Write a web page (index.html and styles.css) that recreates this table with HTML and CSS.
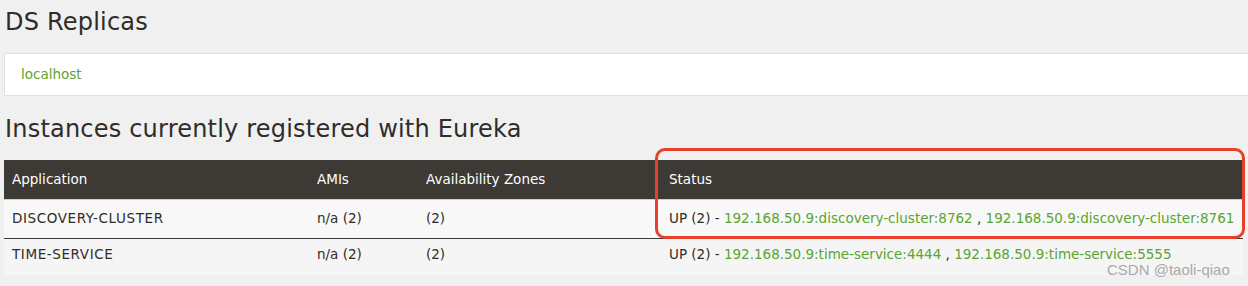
FILE: index.html
```html
<!DOCTYPE html>
<html>
<head>
<meta charset="utf-8">
<link rel="stylesheet" href="styles.css">
</head>
<body>
<div class="page">
  <h1 class="title">DS Replicas</h1>
  <ul class="replicas">
    <li><a class="link" href="#">localhost</a></li>
  </ul>
  <h1 class="title title-instances">Instances currently registered with Eureka</h1>
  <table class="instances">
    <thead>
      <tr>
        <th class="col-app">Application</th>
        <th class="col-ami">AMIs</th>
        <th class="col-az">Availability Zones</th>
        <th class="col-status">Status</th>
      </tr>
    </thead>
    <tbody>
      <tr class="row-first">
        <td class="app">DISCOVERY-CLUSTER</td>
        <td>n/a (2)</td>
        <td>(2)</td>
        <td>UP (2) - <a class="link" href="#">192.168.50.9:discovery-cluster:8762</a> , <a class="link" href="#">192.168.50.9:discovery-cluster:8761</a></td>
      </tr>
      <tr class="row-second">
        <td class="app">TIME-SERVICE</td>
        <td>n/a (2)</td>
        <td>(2)</td>
        <td>UP (2) - <a class="link" href="#">192.168.50.9:time-service:4444</a> , <a class="link" href="#">192.168.50.9:time-service:5555</a></td>
      </tr>
    </tbody>
  </table>
  <div class="highlight"></div>
  <div class="watermark">CSDN @taoli-qiao</div>
</div>
</body>
</html>
```

FILE: styles.css
```css
html, body {
  margin: 0;
  padding: 0;
  background: #f0f0f0;
}
body {
  font-family: "DejaVu Sans", "Open Sans", sans-serif;
  color: #333;
  width: 1248px;
  height: 286px;
  overflow: hidden;
}
.page {
  position: relative;
  padding: 0 5px 0 4px;
  height: 286px;
}
.title {
  margin: 0;
  padding: 8px 0 0 1px;
  font-size: 24px;
  letter-spacing: 0.2px;
  font-weight: normal;
  line-height: 28px;
  color: #2f2c29;
  height: 44px;
  box-sizing: border-box;
}
.title-instances {
  padding-top: 19px;
  height: 64px;
}
.replicas {
  list-style: none;
  margin: 9px -20px 0 0;
  padding: 0 16px;
  background: #fff;
  border: 1px solid #e0e0e0;
  height: 41px;
  display: flex;
  align-items: center;
}
.replicas li {
  margin-top: -3px;
}
.link {
  color: #5ba431;
  text-decoration: none;
  font-size: 13.5px;
}
.instances {
  width: 1239px;
  border-collapse: collapse;
  font-size: 13.5px;
  table-layout: fixed;
}
.instances th {
  background: #3d3a35;
  color: #fff;
  font-weight: normal;
  text-align: left;
  height: 39px;
  padding: 0 8px;
  border-bottom: 1px solid #cfcfcf;
  box-sizing: border-box;
}
.instances td {
  background: #f5f5f5;
  padding: 0 8px;
  color: #2f2c29;
  white-space: nowrap;
}
.instances td.app {
  letter-spacing: 0.6px;
}
.row-first td {
  background: #f8f8f8;
  height: 36px;
  padding-bottom: 2px;
  border-bottom: 1px solid #3a3a3a;
}
.row-second td {
  height: 30px;
  padding-bottom: 6px;
}
.col-app { width: 305px; }
.col-ami { width: 109px; }
.col-az { width: 243px; }
.col-status { width: 582px; }
.highlight {
  position: absolute;
  left: 655px;
  top: 148px;
  width: 590px;
  height: 91px;
  box-sizing: border-box;
  border: 3px solid #e8412b;
  border-radius: 10px;
}
.watermark {
  position: absolute;
  left: 1107px;
  top: 261px;
  font-family: "Liberation Sans", Arial, sans-serif;
  font-size: 15px;
  color: #a9a9a9;
}
```
